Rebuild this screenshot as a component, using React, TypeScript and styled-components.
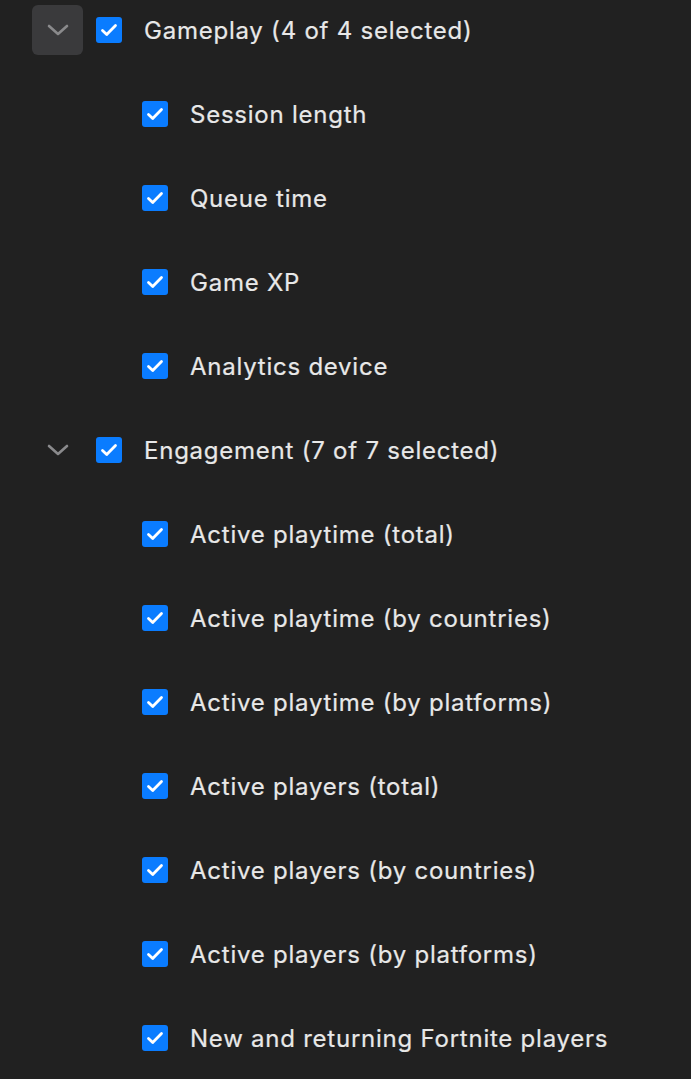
import React, { useState } from "react"
import styled, { createGlobalStyle } from "styled-components"

const GlobalStyle = createGlobalStyle`
  html, body {
    margin: 0;
    padding: 0;
    background: #212121;
  }
  body {
    font-family: Inter, "Noto Sans", sans-serif;
    color: #e8e8e8;
  }
`

interface Group {
  name: string
  items: string[]
}

const groups: Group[] = [
  {
    name: "Gameplay",
    items: ["Session length", "Queue time", "Game XP", "Analytics device"],
  },
  {
    name: "Engagement",
    items: [
      "Active playtime (total)",
      "Active playtime (by countries)",
      "Active playtime (by platforms)",
      "Active players (total)",
      "Active players (by countries)",
      "Active players (by platforms)",
      "New and returning Fortnite players",
    ],
  },
]

const Page = styled.div`
  display: flex;
  flex-direction: column;
  gap: 24px;
  padding-left: 32px;
  min-height: 1079px;
  box-sizing: border-box;
`

const Row = styled.div<{ $indent?: boolean }>`
  display: flex;
  align-items: center;
  height: 60px;
  padding-left: ${p => (p.$indent ? "110px" : "0")};
`

const Toggle = styled.button<{ $active?: boolean }>`
  width: 51px;
  height: 50px;
  margin-right: 13px;
  border: none;
  border-radius: 6px;
  padding: 0;
  display: flex;
  align-items: center;
  justify-content: center;
  background: ${p => (p.$active ? "#3a3a3c" : "transparent")};
  cursor: pointer;
`

const Box = styled.span`
  width: 26px;
  height: 26px;
  border-radius: 3px;
  background: #0a7cff;
  display: flex;
  align-items: center;
  justify-content: center;
  flex-shrink: 0;
`

const Label = styled.span<{ $gap: number }>`
  margin-left: ${p => p.$gap}px;
  font-size: 24px;
  letter-spacing: 0.76px;
  white-space: nowrap;
  -webkit-text-stroke: 0.2px #e8e8e8;
`

const Chevron = () => (
  <svg width="22" height="12" viewBox="0 0 22 12" fill="none">
    <path d="M2 2l9 8 9-8" stroke="#8a8a8c" strokeWidth="2.6" strokeLinecap="round" strokeLinejoin="round" />
  </svg>
)

const Check = () => (
  <Box>
    <svg width="18" height="14" viewBox="0 0 18 14" fill="none">
      <path d="M2.5 7.5l4.2 4 8.8-9" stroke="#ffffff" strokeWidth="2.8" strokeLinecap="round" strokeLinejoin="round" />
    </svg>
  </Box>
)

const App = () => {
  const [hover] = useState(0)
  return (
    <>
      <GlobalStyle />
      <Page>
        {groups.map((g, i) => (
          <React.Fragment key={g.name}>
            <Row>
              <Toggle $active={i === hover}>
                <Chevron />
              </Toggle>
              <Check />
              <Label $gap={22}>
                {g.name} ({g.items.length} of {g.items.length} selected)
              </Label>
            </Row>
            {g.items.map(item => (
              <Row key={item} $indent>
                <Check />
                <Label $gap={22}>{item}</Label>
              </Row>
            ))}
          </React.Fragment>
        ))}
      </Page>
    </>
  )
}

export default App
